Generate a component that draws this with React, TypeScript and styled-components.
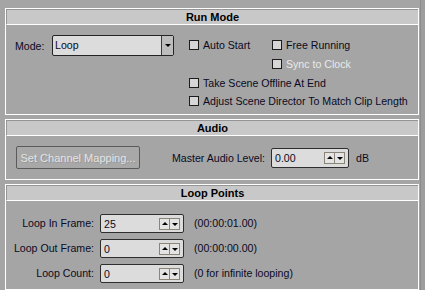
import { Fragment } from 'react';
import styled, { createGlobalStyle } from 'styled-components';

const GlobalStyle = createGlobalStyle`
  html, body {
    margin: 0;
    padding: 0;
    background: #a5a5a5;
  }
  body {
    font-family: "Liberation Sans", Arial, sans-serif;
    font-size: 10.6px;
    color: #0a0a23;
  }
`;

const Screen = styled.div`
  display: flex;
  width: 425px;
  height: 290px;
  overflow: hidden;
  background: #a5a5a5;
`;

const Rollouts = styled.div`
  width: 414px;
  margin-left: 5px;
  padding-top: 8px;
  display: flex;
  flex-direction: column;
  gap: 4px;
`;

const Gutter = styled.div`
  flex: 1;
  margin-left: 1px;
  background: #9d9d9d;
  border-left: 1px solid #8c8c8c;
`;

const Panel = styled.section`
  border: 1px solid #fff;
`;

const Header = styled.div`
  height: 14px;
  line-height: 14px;
  border-top: 1px solid #959595;
  border-left: 1px solid #959595;
  border-bottom: 1px solid #fff;
  background: #c8c8c8;
  color: #000;
  font-size: 11px;
  font-weight: bold;
  text-align: center;
`;

const RunModeBody = styled.div`
  height: 89px;
  box-sizing: border-box;
  padding: 10px 0 0 9px;
  display: flex;
  align-items: flex-start;
`;

const ModeField = styled.div`
  display: flex;
  align-items: center;
  height: 21px;
`;

const FieldLabel = styled.span<{ $width?: number }>`
  width: ${(p) => (p.$width ? `${p.$width}px` : 'auto')};
  white-space: nowrap;
`;

const Select = styled.div`
  width: 120px;
  height: 19px;
  display: flex;
  border: 1px solid #232323;
  border-radius: 2px;
  background: #dcdcdc;
`;

const SelectValue = styled.span`
  flex: 1;
  padding-left: 2px;
  line-height: 19px;
`;

const SelectArrow = styled.span`
  width: 11px;
  border-left: 1px solid #3a3a3a;
  background: #bdbdbd;
  display: flex;
  align-items: center;
  justify-content: center;
  &::after {
    content: '';
    border-left: 3px solid transparent;
    border-right: 3px solid transparent;
    border-top: 3px solid #000;
  }
`;

const Options = styled.div`
  margin-left: 15px;
  margin-top: 1px;
  display: grid;
  grid-template-columns: 83px auto;
  grid-auto-rows: 18.7px;
`;

const Check = styled.label<{ $col?: number; $span?: boolean; $disabled?: boolean }>`
  display: flex;
  align-items: center;
  gap: 4px;
  white-space: nowrap;
  grid-column: ${(p) => (p.$span ? '1 / span 2' : p.$col ? `${p.$col}` : 'auto')};
  color: ${(p) => (p.$disabled ? '#e9e9e9' : 'inherit')};
`;

const Box = styled.span`
  width: 8px;
  height: 8px;
  border: 1px solid #1c1c1c;
  background: #d6d6d6;
`;

const AudioBody = styled.div`
  height: 43px;
  box-sizing: border-box;
  padding: 10px 0 0 10px;
  display: grid;
  grid-template-columns: 124px 131px 78px auto;
  align-items: center;
  align-content: start;
`;

const Button = styled.div`
  box-sizing: border-box;
  height: 23px;
  border: 1px solid #5a5a5a;
  border-radius: 2px;
  background: #a8a8a8;
  color: #e4e4e4;
  text-shadow: 1px 1px 0 #979797;
  font-size: 11px;
  display: flex;
  align-items: center;
  justify-content: center;
  white-space: nowrap;
`;

const RightLabel = styled.span`
  text-align: right;
  padding-right: 6px;
  white-space: nowrap;
`;

const Unit = styled.span`
  padding-left: 7px;
`;

const Spinner = styled.div<{ $height: number }>`
  height: ${(p) => p.$height}px;
  box-sizing: border-box;
  display: flex;
  align-items: center;
  border: 1px solid #2e2e2e;
  border-radius: 2px;
  background: #dcdcdc;
  padding-right: 3px;
`;

const SpinValue = styled.span`
  flex: 1;
  padding-left: 3px;
`;

const SpinButtons = styled.span`
  display: flex;
  height: 10px;
  border: 1px solid #8b8577;
  background: #e4e4e4;
`;

const SpinArrow = styled.span<{ $up?: boolean }>`
  width: 9px;
  display: flex;
  align-items: center;
  justify-content: center;
  & + & {
    border-left: 1px solid #8b8577;
  }
  &::after {
    content: '';
    border-left: 3px solid transparent;
    border-right: 3px solid transparent;
    ${(p) => (p.$up ? 'border-bottom: 3px solid #000; margin-top: -1px;' : 'border-top: 3px solid #000; margin-top: 2px;')}
  }
`;

const LoopBody = styled.div`
  padding-top: 13px;
  display: grid;
  grid-template-columns: 94px 84px auto;
  grid-auto-rows: 25px;
  align-items: start;
`;

const LoopLabel = styled.span`
  text-align: right;
  padding-right: 6px;
  line-height: 19px;
  white-space: nowrap;
`;

const LoopNote = styled.span`
  padding-left: 10px;
  line-height: 19px;
  white-space: nowrap;
`;

function NumberSpinner({ value, height }: { value: string; height: number }): JSX.Element {
  return (
    <Spinner $height={height}>
      <SpinValue>{value}</SpinValue>
      <SpinButtons>
        <SpinArrow $up />
        <SpinArrow />
      </SpinButtons>
    </Spinner>
  );
}

const loopRows = [
  { label: 'Loop In Frame:', value: '25', note: '(00:00:01.00)' },
  { label: 'Loop Out Frame:', value: '0', note: '(00:00:00.00)' },
  { label: 'Loop Count:', value: '0', note: '(0 for infinite looping)' },
];

function App(): JSX.Element {
  return (
    <Screen>
      <GlobalStyle />
      <Rollouts>
        <Panel>
          <Header>Run Mode</Header>
          <RunModeBody>
            <ModeField>
              <FieldLabel $width={37}>Mode:</FieldLabel>
              <Select>
                <SelectValue>Loop</SelectValue>
                <SelectArrow />
              </Select>
            </ModeField>
            <Options>
              <Check $col={1}>
                <Box />
                Auto Start
              </Check>
              <Check $col={2}>
                <Box />
                Free Running
              </Check>
              <Check $col={2} $disabled>
                <Box />
                Sync to Clock
              </Check>
              <Check $span>
                <Box />
                Take Scene Offline At End
              </Check>
              <Check $span>
                <Box />
                Adjust Scene Director To Match Clip Length
              </Check>
            </Options>
          </RunModeBody>
        </Panel>

        <Panel>
          <Header>Audio</Header>
          <AudioBody>
            <Button>Set Channel Mapping...</Button>
            <RightLabel>Master Audio Level:</RightLabel>
            <NumberSpinner value="0.00" height={20} />
            <Unit>dB</Unit>
          </AudioBody>
        </Panel>

        <Panel>
          <Header>Loop Points</Header>
          <LoopBody>
            {loopRows.map((row) => (
              <Fragment key={row.label}>
                <LoopLabel>{row.label}</LoopLabel>
                <NumberSpinner value={row.value} height={19} />
                <LoopNote>{row.note}</LoopNote>
              </Fragment>
            ))}
          </LoopBody>
        </Panel>
      </Rollouts>
      <Gutter />
    </Screen>
  );
}

export default App;
